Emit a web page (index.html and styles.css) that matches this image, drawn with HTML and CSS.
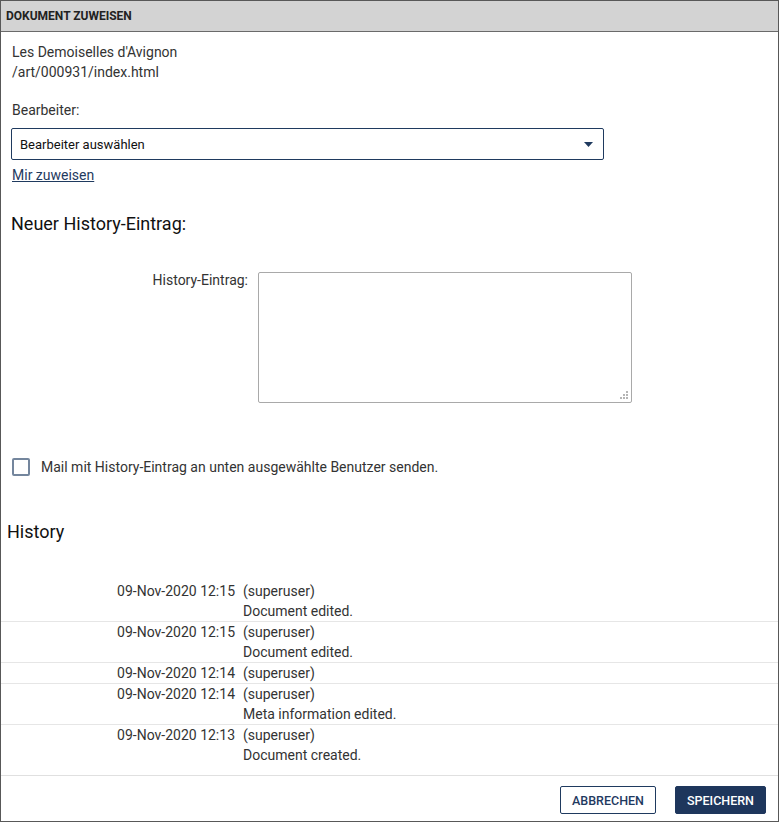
FILE: index.html
```html
<!DOCTYPE html>
<html lang="de">
<head>
<meta charset="utf-8">
<title>Dokument zuweisen</title>
<link rel="stylesheet" href="styles.css">
</head>
<body>
<div class="dialog">
  <div class="dialog-header">DOKUMENT ZUWEISEN</div>
  <div class="dialog-body">
    <div class="doc-info">
      <div>Les Demoiselles d'Avignon</div>
      <div>/art/000931/index.html</div>
    </div>
    <div class="field-label">Bearbeiter:</div>
    <div class="select">
      <span>Bearbeiter auswählen</span>
      <svg class="caret" width="9" height="5" viewBox="0 0 9 5"><path d="M0 0H9L4.5 5Z" fill="#1f3a5f"/></svg>
    </div>
    <a class="assign-link" href="#">Mir zuweisen</a>

    <h2 class="section-title">Neuer History-Eintrag:</h2>
    <div class="form-row">
      <label class="row-label" for="entry">History-Eintrag:</label>
      <textarea id="entry" class="entry"></textarea>
    </div>
    <div class="check-row">
      <span class="checkbox"></span>
      <span>Mail mit History-Eintrag an unten ausgewählte Benutzer senden.</span>
    </div>

    <h2 class="history-title">History</h2>
    <div class="history">
      <div class="h-row">
        <div class="h-date">09-Nov-2020 12:15</div>
        <div class="h-info"><div>(superuser)</div><div>Document edited.</div></div>
      </div>
      <div class="h-row">
        <div class="h-date">09-Nov-2020 12:15</div>
        <div class="h-info"><div>(superuser)</div><div>Document edited.</div></div>
      </div>
      <div class="h-row">
        <div class="h-date">09-Nov-2020 12:14</div>
        <div class="h-info"><div>(superuser)</div></div>
      </div>
      <div class="h-row">
        <div class="h-date">09-Nov-2020 12:14</div>
        <div class="h-info"><div>(superuser)</div><div>Meta information edited.</div></div>
      </div>
      <div class="h-row last">
        <div class="h-date">09-Nov-2020 12:13</div>
        <div class="h-info"><div>(superuser)</div><div>Document created.</div></div>
      </div>
    </div>
  </div>
  <div class="dialog-footer">
    <button class="btn btn-outline">ABBRECHEN</button>
    <button class="btn btn-primary">SPEICHERN</button>
  </div>
</div>
</body>
</html>
```
FILE: styles.css
```css
* { box-sizing: border-box; }
html, body { margin: 0; padding: 0; background: #fff; }
body {
  font-family: Roboto, "Liberation Sans", sans-serif;
  font-size: 14px;
  color: #333;
}
.dialog {
  width: 779px;
  height: 822px;
  border: 1px solid #585858;
  display: flex;
  flex-direction: column;
  overflow: hidden;
}
.dialog-header {
  height: 31px;
  flex: none;
  background: #d3d3d3;
  border-bottom: 1px solid #6a6a6a;
  padding-left: 5px;
  display: flex;
  align-items: center;
  font-size: 12px;
  font-weight: 700;
  color: #222;
}
.dialog-body {
  flex: 1;
  overflow: hidden;
  padding-top: 10px;
}
.doc-info {
  padding-left: 11px;
  line-height: 20px;
}
.field-label {
  padding-left: 11px;
  margin-top: 18px;
  line-height: 20px;
}
.select {
  margin: 8px 0 0 10px;
  width: 593px;
  height: 32px;
  border: 1px solid #1f3a5f;
  border-radius: 2px;
  display: flex;
  align-items: center;
  justify-content: space-between;
  padding: 0 10px 0 8px;
  font-size: 13px;
  color: #111;
}
.caret { display: block; }
.assign-link {
  display: inline-block;
  margin: 5px 0 0 11px;
  line-height: 20px;
  color: #1f3a5f;
  text-decoration: underline;
}
.section-title {
  margin: 27px 0 0 10px;
  font-size: 18px;
  font-weight: 400;
  line-height: 24px;
  color: #111;
}
.form-row {
  margin-top: 36px;
  display: flex;
  align-items: flex-start;
}
.row-label {
  width: 247px;
  flex: none;
  text-align: right;
  margin-right: 10px;
  line-height: 16px;
  margin-top: 0;
}
.entry {
  width: 374px;
  height: 131px;
  margin: 0;
  border: 1px solid #a9a9a9;
  border-radius: 2px;
  font-family: inherit;
  font-size: 14px;
  resize: none;
  background: #fff url("data:image/svg+xml,%3Csvg xmlns='http://www.w3.org/2000/svg' width='9' height='9' viewBox='0 0 9 9'%3E%3Cg fill='%23b5b5b5'%3E%3Crect x='6' y='0' width='2' height='2'/%3E%3Crect x='6' y='3' width='2' height='2'/%3E%3Crect x='3' y='3' width='2' height='2'/%3E%3Crect x='6' y='6' width='2' height='2'/%3E%3Crect x='3' y='6' width='2' height='2'/%3E%3Crect x='0' y='6' width='2' height='2'/%3E%3C/g%3E%3C/svg%3E") no-repeat right 2px bottom 2px;
}
.check-row {
  margin: 54px 0 0 11px;
  display: flex;
  align-items: center;
  gap: 11px;
  line-height: 20px;
}
.checkbox {
  width: 18px;
  height: 18px;
  border: 2px solid #74869d;
  border-radius: 2px;
  flex: none;
}
.history-title {
  margin: 43px 0 0 6px;
  font-size: 18px;
  font-weight: 400;
  line-height: 24px;
  color: #111;
}
.history {
  margin-top: 37px;
}
.h-row {
  display: flex;
  border-bottom: 1px solid #e6e6e6;
  line-height: 20px;
}
.h-row.last { border-bottom: none; }
.h-date {
  width: 242px;
  flex: none;
  text-align: right;
  padding-right: 8px;
}
.dialog-footer {
  flex: none;
  height: 46px;
  border-top: 1px solid #e0e0e0;
  display: flex;
  justify-content: flex-end;
  align-items: flex-start;
  padding: 10px 12px 0 0;
  gap: 19px;
}
.btn {
  height: 28px;
  border-radius: 2px;
  font-family: inherit;
  font-size: 12.5px;
  font-weight: 500;
  padding: 0 6px;
  margin: 0;
}
.btn-outline {
  width: 96px;
  background: #fff;
  border: 1px solid #1f3a5f;
  color: #1f3a5f;
}
.btn-primary {
  width: 91px;
  background: #1e365c;
  border: 1px solid #1e365c;
  color: #fff;
}
```
